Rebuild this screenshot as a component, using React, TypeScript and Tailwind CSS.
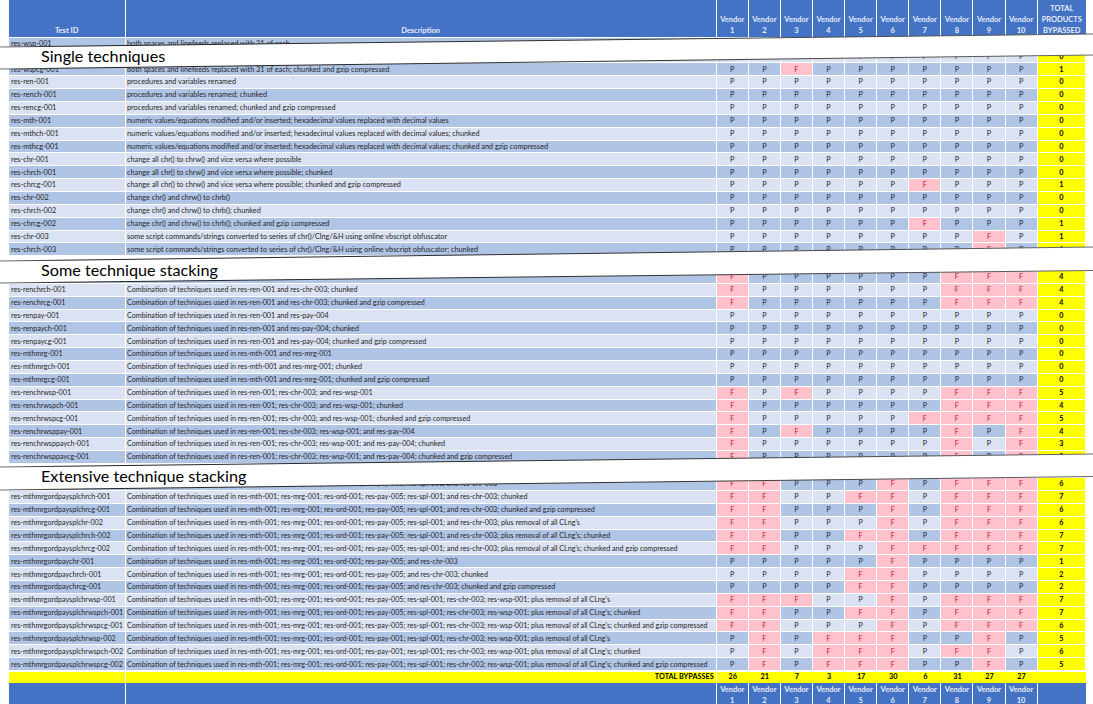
import React from 'react';

type Row = [id: string, desc: string, flags: string];

const ALL_P = 'PPPPPPPPPP';
const COLS = 'grid grid-cols-[116.5px_591.2px_repeat(10,32.1px)_48.3px]';
const VENDORS = [1, 2, 3, 4, 5, 6, 7, 8, 9, 10];

const combo = 'Combination of techniques used in ';
const big5 = combo + 'res-mth-001; res-mrg-001; res-ord-001; res-pay-005; res-spl-001; ';
const big1 = combo + 'res-mth-001; res-mrg-001; res-ord-001; res-pay-001; res-spl-001; ';
const hexa = 'numeric values/equations modified and/or inserted; hexadecimal values replaced with decimal values';
const chrAll = 'change all chr() to chrw() and vice versa where possible';
const chrB = 'change chr() and chrw() to chrb()';
const obf = 'some script commands/strings converted to series of chr()/Clng/&H using online vbscript obfuscator';

const single: Row[] = [
  ['res-wsp-001', 'both spaces and linefeeds replaced with 31 of each', ALL_P],
  ['res-wspch-001', 'both spaces and linefeeds replaced with 31 of each; chunked', ALL_P],
  ['res-wspcg-001', 'both spaces and linefeeds replaced with 31 of each; chunked and gzip compressed', 'PPFPPPPPPP'],
  ['res-ren-001', 'procedures and variables renamed', ALL_P],
  ['res-rench-001', 'procedures and variables renamed; chunked', ALL_P],
  ['res-rencg-001', 'procedures and variables renamed; chunked and gzip compressed', ALL_P],
  ['res-mth-001', hexa, ALL_P],
  ['res-mthch-001', hexa + '; chunked', ALL_P],
  ['res-mthcg-001', hexa + '; chunked and gzip compressed', ALL_P],
  ['res-chr-001', chrAll, ALL_P],
  ['res-chrch-001', chrAll + '; chunked', ALL_P],
  ['res-chrcg-001', chrAll + '; chunked and gzip compressed', 'PPPPPPFPPP'],
  ['res-chr-002', chrB, ALL_P],
  ['res-chrch-002', 'change chr() and chrw() to chrb(); chunked', ALL_P],
  ['res-chrcg-002', 'change chr() and chrw() to chrb(); chunked and gzip compressed', 'PPPPPPFPPP'],
  ['res-chr-003', obf, 'PPPPPPPPFP'],
  ['res-chrch-003', obf + '; chunked', 'PPPPPPPPFP'],
];

const some: Row[] = [
  ['res-renchr-001', combo + 'res-ren-001 and res-chr-003', 'FPPPPPPFFF'],
  ['res-renchrch-001', combo + 'res-ren-001 and res-chr-003; chunked', 'FPPPPPPFFF'],
  ['res-renchrcg-001', combo + 'res-ren-001 and res-chr-003; chunked and gzip compressed', 'FPPPPPPFFF'],
  ['res-renpay-001', combo + 'res-ren-001 and res-pay-004', ALL_P],
  ['res-renpaych-001', combo + 'res-ren-001 and res-pay-004; chunked', ALL_P],
  ['res-renpaycg-001', combo + 'res-ren-001 and res-pay-004; chunked and gzip compressed', ALL_P],
  ['res-mthmrg-001', combo + 'res-mth-001 and res-mrg-001', ALL_P],
  ['res-mthmrgch-001', combo + 'res-mth-001 and res-mrg-001; chunked', ALL_P],
  ['res-mthmrgcg-001', combo + 'res-mth-001 and res-mrg-001; chunked and gzip compressed', ALL_P],
  ['res-renchrwsp-001', combo + 'res-ren-001; res-chr-003; and res-wsp-001', 'FPFPPPPFFF'],
  ['res-renchrwspch-001', combo + 'res-ren-001; res-chr-003; and res-wsp-001; chunked', 'FPPPPPPFFF'],
  ['res-renchrwspcg-001', combo + 'res-ren-001; res-chr-003; and res-wsp-001; chunked and gzip compressed', 'FPPPPPFFFF'],
  ['res-renchrwsppay-001', combo + 'res-ren-001; res-chr-003; res-wsp-001; and res-pay-004', 'FPFPPPPFPF'],
  ['res-renchrwsppaych-001', combo + 'res-ren-001; res-chr-003; res-wsp-001; and res-pay-004; chunked', 'FPPPPPPFPF'],
  ['res-renchrwsppaycg-001', combo + 'res-ren-001; res-chr-003; res-wsp-001; and res-pay-004; chunked and gzip compressed', 'FPPPPPPFPF'],
];

const extensive: Row[] = [
  ['res-mthmrgordpaysplchr-001', big5 + 'and res-chr-003', 'FFPPPFPFFF'],
  ['res-mthmrgordpaysplchrch-001', big5 + 'and res-chr-003; chunked', 'FFPPFFPFFF'],
  ['res-mthmrgordpaysplchrcg-001', big5 + 'and res-chr-003; chunked and gzip compressed', 'FFPPPFPFFF'],
  ['res-mthmrgordpaysplchr-002', big5 + "and res-chr-003; plus removal of all CLng's", 'FFPPPFPFFF'],
  ['res-mthmrgordpaysplchrch-002', big5 + "and res-chr-003; plus removal of all CLng's; chunked", 'FFPPFFPFFF'],
  ['res-mthmrgordpaysplchrcg-002', big5 + "and res-chr-003; plus removal of all CLng's; chunked and gzip compressed", 'FFPPPFFFFF'],
  ['res-mthmrgordpaychr-001', combo + 'res-mth-001; res-mrg-001; res-ord-001; res-pay-005; and res-chr-003', 'PPPPPFPPPP'],
  ['res-mthmrgordpaychrch-001', combo + 'res-mth-001; res-mrg-001; res-ord-001; res-pay-005; and res-chr-003; chunked', 'PPPPFFPPPP'],
  ['res-mthmrgordpaychrcg-001', combo + 'res-mth-001; res-mrg-001; res-ord-001; res-pay-005; and res-chr-003; chunked and gzip compressed', 'PPPPFFPPPP'],
  ['res-mthmrgordpaysplchrwsp-001', big5 + "res-chr-003; res-wsp-001; plus removal of all CLng's", 'FFFPPFPFFF'],
  ['res-mthmrgordpaysplchrwspch-001', big5 + "res-chr-003; res-wsp-001; plus removal of all CLng's; chunked", 'FFPPFFPFFF'],
  ['res-mthmrgordpaysplchrwspcg-001', big5 + "res-chr-003; res-wsp-001; plus removal of all CLng's; chunked and gzip compressed", 'FFPPPFPFFF'],
  ['res-mthmrgordpaysplchrwsp-002', big1 + "res-chr-003; res-wsp-001; plus removal of all CLng's", 'PFPFFFPPFP'],
  ['res-mthmrgordpaysplchrwspch-002', big1 + "res-chr-003; res-wsp-001; plus removal of all CLng's; chunked", 'PFPFFFPFFP'],
  ['res-mthmrgordpaysplchrwspcg-002', big1 + "res-chr-003; res-wsp-001; plus removal of all CLng's; chunked and gzip compressed", 'PFPFFFPPFP'],
];

const totals = [26, 21, 7, 3, 17, 30, 6, 31, 27, 27];

const DataRow: React.FC<{ row: Row; dark: boolean; size: string }> = ({ row, dark, size }) => {
  const bg = dark ? 'bg-[#b0c4e6]' : 'bg-[#dae2f3]';
  const cell = 'border-r border-b border-white flex items-center whitespace-nowrap overflow-hidden pt-[1.5px]';
  const flags = row[2].split('');
  return (
    <div className={`${COLS} h-[12.87px] ${size} text-[#262626]`}>
      <div className={`${cell} ${bg} pl-[2px]`}>{row[0]}</div>
      <div className={`${cell} ${bg} pl-[1.5px]`}>{row[1]}</div>
      {flags.map((f, i) => (
        <div
          key={i}
          className={`${cell} justify-center ${f === 'F' ? 'bg-[#ffc1cc] text-[#c8102e]' : bg}`}
        >
          {f}
        </div>
      ))}
      <div className={`${cell} justify-center bg-[#ffff00] font-bold text-black`}>
        {flags.filter((f) => f === 'F').length}
      </div>
    </div>
  );
};

const Rows: React.FC<{ rows: Row[]; size: string }> = ({ rows, size }) => (
  <div>
    {rows.map((row, i) => (
      <DataRow key={row[0]} row={row} dark={i % 2 === 0} size={size} />
    ))}
  </div>
);

const Header: React.FC = () => (
  <div className={`${COLS} h-[37.7px] text-[7.5px] font-bold text-[#e6ecf8] leading-[10.8px]`}>
    <div className="bg-[#4472c4] border-r border-b border-white flex items-end justify-center">Test ID</div>
    <div className="bg-[#4472c4] border-r border-b border-white flex items-end justify-center">Description</div>
    {VENDORS.map((n) => (
      <div key={n} className="bg-[#4472c4] border-r border-b border-white flex flex-col items-center justify-end">
        <span>Vendor</span>
        <span>{n}</span>
      </div>
    ))}
    <div className="bg-[#4472c4] border-b border-white flex flex-col items-center justify-end">
      <span>TOTAL</span>
      <span>PRODUCTS</span>
      <span>BYPASSED</span>
    </div>
  </div>
);

const Footer: React.FC = () => (
  <div className={`${COLS} h-[22px] text-[7.5px] font-bold text-[#e6ecf8] leading-[10.8px]`}>
    <div className="bg-[#4472c4] border-r border-white" />
    <div className="bg-[#4472c4] border-r border-white" />
    {VENDORS.map((n) => (
      <div key={n} className="bg-[#4472c4] border-r border-white flex flex-col items-center pt-[2px]">
        <span>Vendor</span>
        <span>{n}</span>
      </div>
    ))}
    <div className="bg-[#4472c4]" />
  </div>
);

export default function App() {
  return (
    <div className="relative h-screen overflow-hidden bg-white pl-[9px] font-['Lato','Liberation_Sans',sans-serif]">
      <Header />
      <Rows rows={single} size="text-[7.3px]" />
      <div className="h-[14.7px]" />
      <Rows rows={some} size="text-[7.17px]" />
      <div className="h-[14.3px]" />
      <Rows rows={extensive} size="text-[7.17px]" />

      {/* totals */}
      <div className={`${COLS} h-[12px] text-[7.3px] font-bold text-black pt-[1px]`}>
        <div className="bg-[#ffff00] border-r border-white" />
        <div className="bg-[#ffff00] border-r border-white flex items-center justify-end pr-[2px]">TOTAL BYPASSES</div>
        {totals.map((t, i) => (
          <div key={i} className="bg-[#ffff00] flex items-center justify-center">
            {t}
          </div>
        ))}
        <div className="bg-[#ffff00]" />
      </div>
      <Footer />

      {/* section banners laid over the sheet */}
      <svg className="absolute inset-0 h-full w-full" viewBox="0 0 1093 704" preserveAspectRatio="none">
        <defs>
          <linearGradient id="fade" x1="0" x2="1" y1="0" y2="0">
            <stop offset="0" stopColor="#777" />
            <stop offset="0.06" stopColor="#222" />
            <stop offset="0.6" stopColor="#333" />
            <stop offset="1" stopColor="#666" />
          </linearGradient>
        </defs>
        <polygon points="0,47 1093,34 1093,55 0,69" fill="#fff" />
        <polygon points="0,261 1093,247 1093,270.5 0,283" fill="#fff" />
        <polygon points="0,467 1093,454 1093,476.5 0,490" fill="#fff" />
        <g stroke="url(#fade)" strokeWidth="1" fill="none">
          <line x1="0" y1="47" x2="1093" y2="34" />
          <line x1="0" y1="69" x2="1093" y2="55" />
          <line x1="0" y1="261" x2="1093" y2="247" />
          <line x1="0" y1="283" x2="1093" y2="270.5" />
          <line x1="0" y1="467" x2="1093" y2="454" />
          <line x1="0" y1="490" x2="1093" y2="476.5" />
        </g>
      </svg>
      <span className="absolute left-[41px] top-[45px] text-[16.2px] leading-[22px] text-black">Single techniques</span>
      <span className="absolute left-[41px] top-[259px] text-[16.2px] leading-[22px] text-black">Some technique stacking</span>
      <span className="absolute left-[41px] top-[465px] text-[16.2px] leading-[22px] text-black">Extensive technique stacking</span>
    </div>
  );
}
